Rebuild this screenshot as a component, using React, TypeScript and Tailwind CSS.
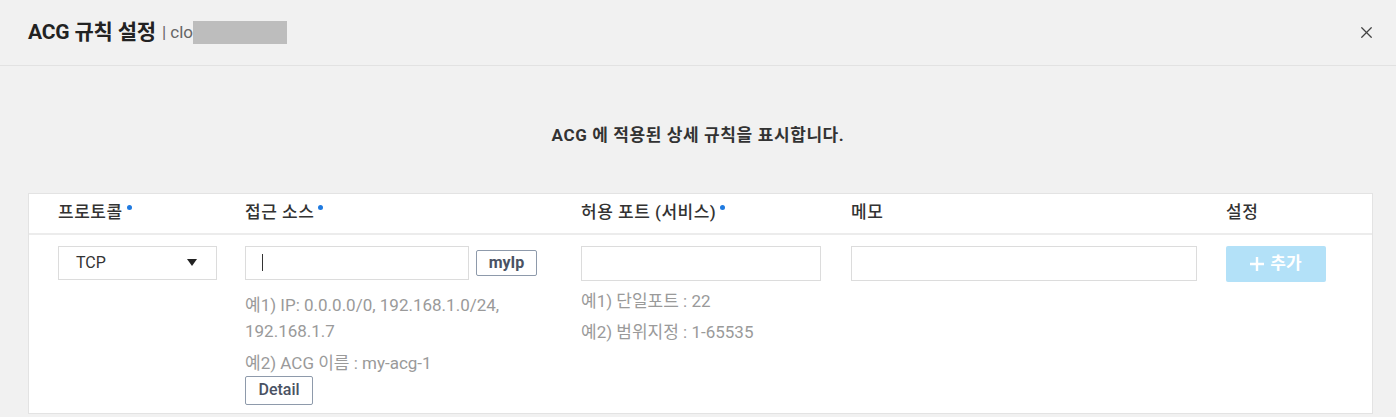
import { X } from 'lucide-react';

const font = { fontFamily: 'Roboto, "Noto Sans CJK KR", "Noto Sans", sans-serif' };

function Required() {
  return <span className="ml-[4px] inline-block h-[5px] w-[5px] -translate-y-[8px] rounded-full bg-[#1f7ae0]" />;
}

export default function App() {
  return (
    <div className="h-[417px] w-full overflow-hidden bg-[#f1f1f1] text-[#333]" style={font}>
      {/* Header */}
      <div className="flex h-[66px] items-center justify-between border-b border-[#e2e2e2] pl-[28px] pr-[20px]">
        <div className="flex items-center">
          <span className="text-[21px] font-bold tracking-[-0.2px] text-[#222]">ACG 규칙 설정</span>
          <span className="ml-[6px] text-[17px] text-[#666]">| clo</span>
          <span className="h-[23px] w-[94px] bg-[#bdbdbd]" />
        </div>
        <button className="text-[#444]">
          <X size={19} strokeWidth={1.6} />
        </button>
      </div>

      {/* Body */}
      <div className="pt-[57px] text-center text-[17px] font-bold tracking-[0.6px] text-[#333]">
        ACG 에 적용된 상세 규칙을 표시합니다.
      </div>

      <div className="ml-[28px] mr-[23px] mt-[44px] border border-[#e3e3e3] bg-white">
        <div className="grid h-[41px] grid-cols-[187px_336px_270px_375px_1fr] items-center border-b-2 border-[#ececec] pl-[29px] text-[17px] font-medium tracking-[0.5px] text-[#333]">
          <div>프로토콜<Required /></div>
          <div>접근 소스<Required /></div>
          <div>허용 포트 (서비스)<Required /></div>
          <div>메모</div>
          <div>설정</div>
        </div>

        <div className="grid grid-cols-[187px_336px_270px_375px_1fr] pb-[8px] pl-[29px] pt-[11px] text-[16px]">
          {/* Protocol */}
          <div>
            <div className="flex h-[34px] w-[159px] items-center justify-between border border-[#dcdcdc] pl-[17px] pr-[19px] text-[#333]">
              <span>TCP</span>
              <svg width="10" height="7" viewBox="0 0 10 7">
                <path d="M0 0h10L5 7z" fill="#222" />
              </svg>
            </div>
          </div>

          {/* Source */}
          <div>
            <div className="flex items-center gap-[7px]">
              <div className="flex h-[34px] w-[224px] items-center border border-[#dcdcdc] pl-[16px]">
                <span className="h-[17px] w-[1px] bg-[#333]" />
              </div>
              <button className="h-[26px] w-[61px] rounded-[2px] border border-[#8e9aab] text-[16px] font-bold text-[#4a5263]">
                myIp
              </button>
            </div>
            <div className="mt-[12px] text-[17px] leading-[26px] text-[#9a9a9a]">
              <div>예1) IP: 0.0.0.0/0, 192.168.1.0/24,</div>
              <div>192.168.1.7</div>
              <div className="mt-[6px]">예2) ACG 이름 : my-acg-1</div>
            </div>
            <button className="h-[29px] w-[68px] rounded-[2px] border border-[#8e9aab] text-[16px] font-medium text-[#4a5263]">
              Detail
            </button>
          </div>

          {/* Port */}
          <div>
            <div className="h-[35px] w-[240px] border border-[#dcdcdc]" />
            <div className="mt-[7px] text-[17px] leading-[26px] text-[#9a9a9a]">
              <div>예1) 단일포트 : 22</div>
              <div className="mt-[5px]">예2) 범위지정 : 1-65535</div>
            </div>
          </div>

          {/* Memo */}
          <div>
            <div className="h-[35px] w-[346px] border border-[#dcdcdc]" />
          </div>

          {/* Action */}
          <div>
            <button className="flex h-[36px] w-[100px] items-center justify-center gap-[6px] rounded-[2px] bg-[#b3e1f8] text-[17px] font-bold text-white">
              <svg width="14" height="14" viewBox="0 0 14 14">
                <path d="M7 0v14M0 7h14" stroke="#fff" strokeWidth="2.4" />
              </svg>
              추가
            </button>
          </div>
        </div>
      </div>
    </div>
  );
}
